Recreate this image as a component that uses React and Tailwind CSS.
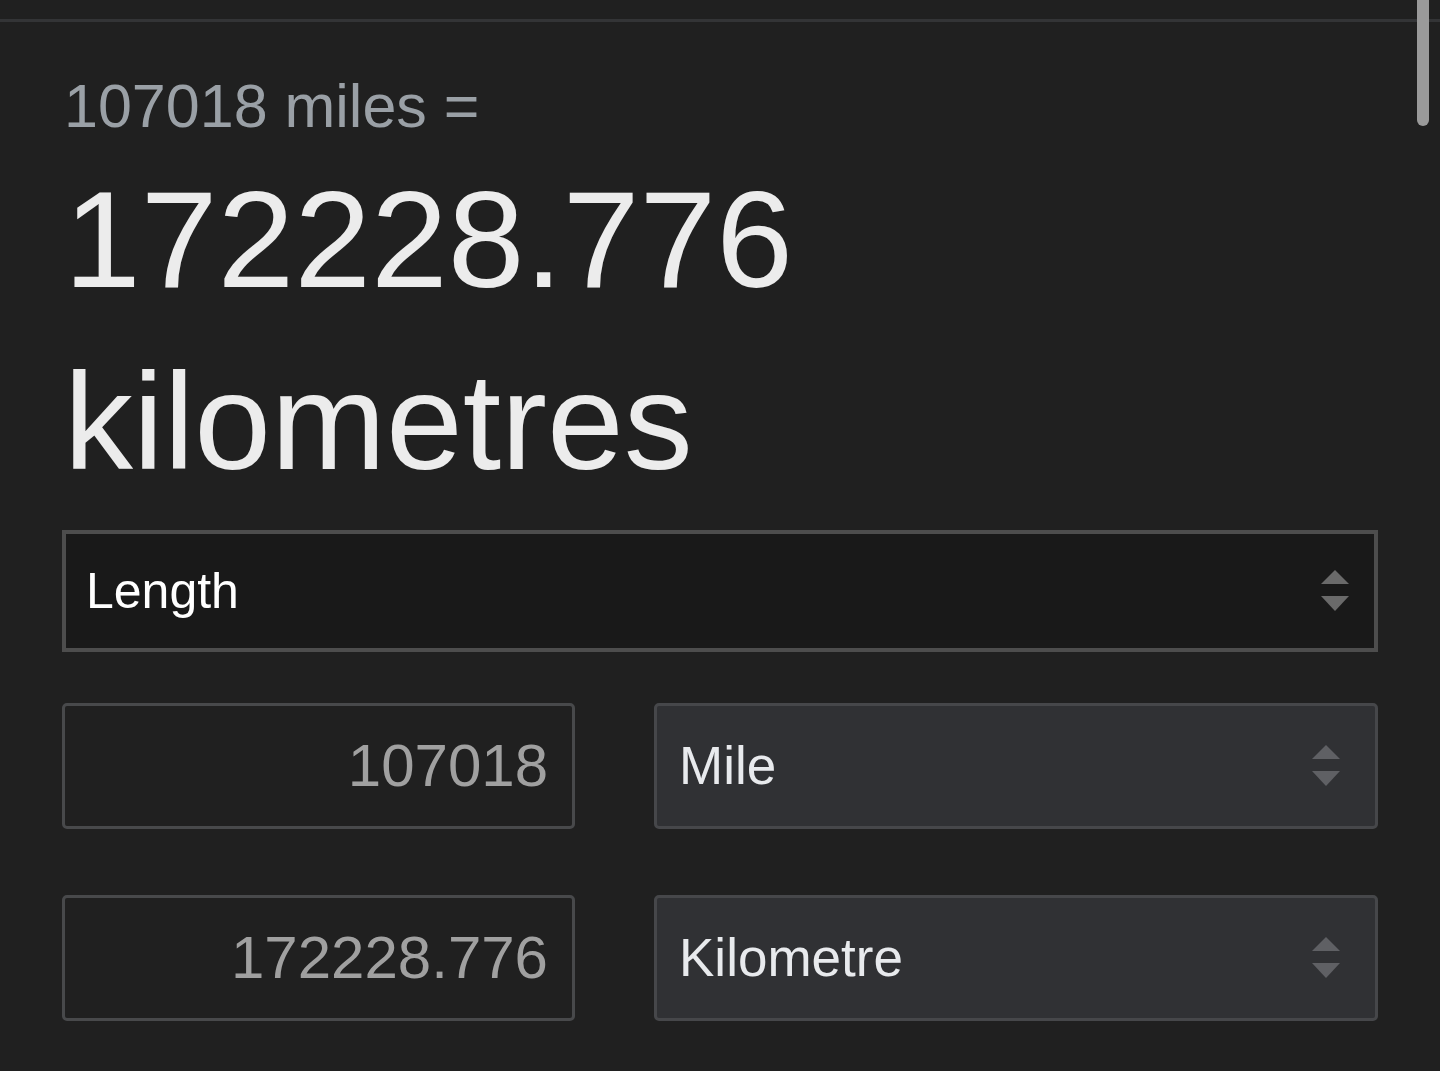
import React from 'react';

function Arrows({ className }) {
  return (
    <svg width="28" height="42" viewBox="0 0 28 42" className={className}>
      <path d="M14 0 L28 14 L0 14 Z" fill="currentColor" />
      <path d="M0 26 L28 26 L14 41 Z" fill="currentColor" />
    </svg>
  );
}

function UnitRow({ value, unit }) {
  return (
    <div className="flex items-stretch justify-between h-[126px]">
      <div className="w-[513px] border-[3px] border-[#48494b] rounded-[5px] flex items-center justify-end pr-[24px] text-[60px] text-[#a0a0a0]">
        {value}
      </div>
      <div className="w-[724px] border-[3px] border-[#46474a] rounded-[5px] bg-[#303134] flex items-center justify-between pl-[22px] pr-[35px]">
        <span className="text-[53px] text-[#e8eaed]">{unit}</span>
        <Arrows className="text-[#5f6064]" />
      </div>
    </div>
  );
}

export default function App() {
  return (
    <div className="min-h-screen bg-[#202020] font-['Liberation_Sans',Arial,sans-serif] relative overflow-hidden">
      <div className="pt-[19px]">
        <div className="h-[3px] bg-[#333436]" />
      </div>
      <div className="absolute right-[11px] top-0 w-[12px] h-[126px] rounded-b-full bg-[#9a9a9a]" />

      <main className="px-[62px]">
        <p className="mt-[48px] pl-[2px] text-[61px] leading-[72px] text-[#9aa0a6]">
          107018 miles =
        </p>
        <p className="mt-[6px] pl-[2px] text-[138px] leading-[182px] text-[#ececec]">
          172228.776
          <br />
          kilometres
        </p>

        <div className="mt-[18px] h-[122px] border-[4px] border-[#4d4d4d] bg-[#191919] flex items-center justify-between pl-[20px] pr-[25px]">
          <span className="text-[50px] text-white">Length</span>
          <Arrows className="text-[#6a6a6a]" />
        </div>

        <div className="mt-[51px] flex flex-col gap-[66px]">
          <UnitRow value="107018" unit="Mile" />
          <UnitRow value="172228.776" unit="Kilometre" />
        </div>
      </main>
    </div>
  );
}
